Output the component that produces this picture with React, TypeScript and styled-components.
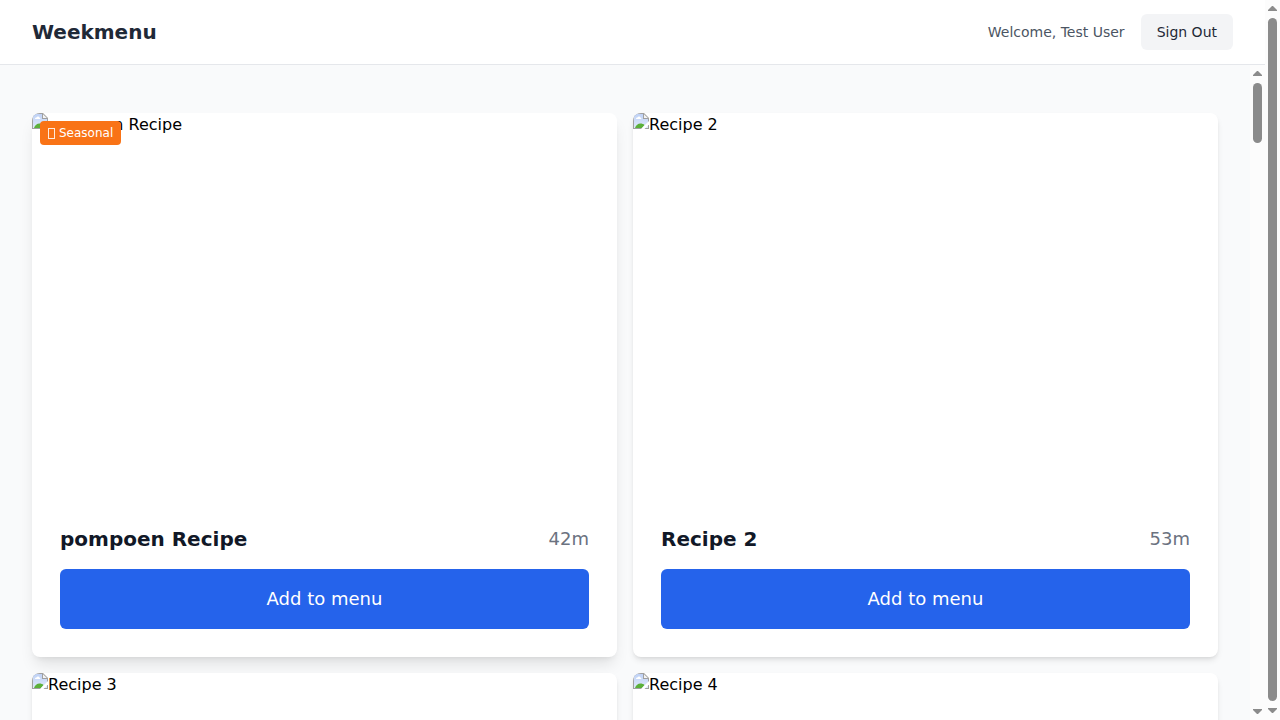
import React, { useCallback, useEffect, useRef, useState } from "react";
import styled, { createGlobalStyle } from "styled-components";

const GlobalStyle = createGlobalStyle`
  *, *::before, *::after { box-sizing: border-box; }
  body {
    margin: 0;
    color: #000;
    background: #f9fafb;
    font-family: "DejaVu Sans", sans-serif;
    font-size: 16px;
    line-height: 24px;
  }
  button { font-family: inherit; border: 0; cursor: pointer; }
  h1, h2 { margin: 0; }
`;

const Viewport = styled.div`
  display: flex;
  align-items: flex-start;
  height: 100vh;
  overflow: hidden;
`;

const Page = styled.div`
  flex: 1;
  min-width: 0;
`;

const Header = styled.header`
  display: flex;
  align-items: center;
  justify-content: space-between;
  padding: 14px 32px;
  background: #fff;
  border-bottom: 1px solid #e5e7eb;
`;

const Brand = styled.h1`
  font-size: 20px;
  line-height: 28px;
  font-weight: 700;
  color: #1f2937;
`;

const Account = styled.div`
  display: flex;
  align-items: center;
  gap: 16px;
  font-size: 14px;
  line-height: 20px;
`;

const Welcome = styled.span`
  color: #4b5563;
`;

const SignOutButton = styled.button`
  padding: 8px 16px;
  border-radius: 6px;
  background: #f3f4f6;
  color: #1f2937;
  font-size: 14px;
  line-height: 20px;
`;

const Content = styled.div`
  display: flex;
  height: calc(100vh - 64px);
`;

const Scroller = styled.main`
  flex: 1;
  min-width: 0;
  overflow-y: auto;
  scrollbar-width: none;
  padding: 48px 32px;
`;

const Bar = styled.div`
  display: flex;
  flex-direction: column;
  flex: none;
  align-self: stretch;
  gap: 7px;
  width: 15px;
  padding: 6px 3px 7px;
  background: #fcfcfc;
`;

const Arrow = styled.svg`
  flex: none;
  display: block;
  fill: #8b8b8b;
`;

const Track = styled.div`
  flex: 1;
  min-height: 0;
`;

const Thumb = styled.div`
  border-radius: 5px;
  background: #8b8b8b;
`;

const Grid = styled.div`
  display: grid;
  grid-template-columns: repeat(2, minmax(0, 1fr));
  gap: 16px;
`;

const Card = styled.article<{ $raised: boolean }>`
  position: relative;
  overflow: hidden;
  border-radius: 8px;
  background: #fff;
  box-shadow: ${(p) =>
    p.$raised
      ? "0 10px 15px -3px rgba(0,0,0,0.1), 0 4px 6px -4px rgba(0,0,0,0.1)"
      : "0 4px 6px -1px rgba(0,0,0,0.1), 0 2px 4px -2px rgba(0,0,0,0.1)"};
`;

const Photo = styled.div`
  display: flex;
  align-items: flex-start;
  height: 384px;
`;

const Badge = styled.span`
  position: absolute;
  top: 8px;
  left: 8px;
  display: flex;
  align-items: center;
  gap: 4px;
  padding: 4px 8px;
  border-radius: 4px;
  background: #f97316;
  color: #fff;
  font-size: 12px;
  line-height: 16px;
`;

const BadgeMark = styled.i`
  width: 7px;
  height: 11px;
  border: 1px solid rgba(255, 255, 255, 0.85);
`;

const CardBody = styled.div`
  display: flex;
  flex-direction: column;
  gap: 16px;
  padding: 28px;
`;

const TitleRow = styled.div`
  display: flex;
  align-items: center;
  justify-content: space-between;
`;

const Title = styled.h2`
  font-size: 20px;
  line-height: 28px;
  font-weight: 700;
  color: #111827;
`;

const Duration = styled.span`
  font-size: 18px;
  line-height: 28px;
  color: #6b7280;
`;

const AddButton = styled.button`
  padding: 16px 24px;
  border-radius: 6px;
  background: #2563eb;
  color: #fff;
  font-size: 18px;
  line-height: 28px;
`;

function MissingPhotoIcon() {
  return (
    <svg width="16" height="16" viewBox="0 0 16 16" aria-hidden="true">
      <defs>
        <linearGradient id="sky" x1="0" y1="0" x2="0" y2="1">
          <stop offset="0" stopColor="#bfd2f6" />
          <stop offset="1" stopColor="#dfe8fb" />
        </linearGradient>
      </defs>
      <path d="M0 0H11L16 5V16H0Z" fill="#a0a0a0" />
      <path d="M1 1H10V6H15V15H1Z" fill="url(#sky)" />
      <path d="M3 6C3 4.500 4 4.500 4.500 4.500C5 3 7 3 7.300 4.500C8.500 4.500 8.500 6 8 6Z" fill="#fff" />
      <path d="M2 15C3 12 5 10.500 7.500 10.500C9 10.500 10.500 11 11.500 12L9 15Z" fill="#5bb03a" />
      <path d="M11 1.200V5H14.800Z" fill="#f4f4f4" />
      <path d="M16 8L8 16H11.500L16 11.500Z" fill="#fff" />
    </svg>
  );
}

interface ScrollBarProps {
  size: number;
  position: number;
}

/* size: visible share of the content; position: share scrolled past */
function ScrollBar({ size, position }: ScrollBarProps) {
  return (
    <Bar aria-hidden="true">
      <Arrow width="9" height="5" viewBox="0 0 9 5">
        <path d="M4 0H5L9 4V5H0V4Z" />
      </Arrow>
      <Track>
        <Thumb
          style={{ height: `${size * 100}%`, position: "relative", top: `${position * 100}%` }}
        />
      </Track>
      <Arrow width="9" height="5" viewBox="0 0 9 5">
        <path d="M0 0H9V1L5 5H4L0 1Z" />
      </Arrow>
    </Bar>
  );
}

interface Recipe {
  name: string;
  minutes: number;
  seasonal: boolean;
}

const minutes = [42, 53, 35, 28, 47, 31, 55, 40, 25, 38, 50, 33];

const recipes: Recipe[] = Array.from({ length: 24 }, (_, i) => ({
  name: i === 0 ? "pompoen Recipe" : `Recipe ${i + 1}`,
  minutes: minutes[i % minutes.length],
  seasonal: i === 0,
}));

function RecipeCard({ recipe }: { recipe: Recipe }) {
  return (
    <Card $raised={recipe.seasonal}>
      <Photo>
        <MissingPhotoIcon />
        <span>{recipe.name}</span>
      </Photo>
      {recipe.seasonal && (
        <Badge>
          <BadgeMark aria-hidden="true" />
          Seasonal
        </Badge>
      )}
      <CardBody>
        <TitleRow>
          <Title>{recipe.name}</Title>
          <Duration>{recipe.minutes}m</Duration>
        </TitleRow>
        <AddButton type="button">Add to menu</AddButton>
      </CardBody>
    </Card>
  );
}

export default function App() {
  const scroller = useRef<HTMLElement>(null);
  const [scroll, setScroll] = useState<ScrollBarProps>({ size: 1, position: 0 });

  const measure = useCallback(() => {
    const el = scroller.current;
    if (!el) return;
    setScroll({
      size: el.clientHeight / el.scrollHeight,
      position: el.scrollTop / el.scrollHeight,
    });
  }, []);

  useEffect(() => {
    measure();
    window.addEventListener("resize", measure);
    return () => window.removeEventListener("resize", measure);
  }, [measure]);

  return (
    <>
      <GlobalStyle />
      <Viewport>
        <Page>
          <Header>
            <Brand>Weekmenu</Brand>
            <Account>
              <Welcome>Welcome, Test User</Welcome>
              <SignOutButton type="button">Sign Out</SignOutButton>
            </Account>
          </Header>
          <Content>
            <Scroller ref={scroller} onScroll={measure}>
              <Grid>
                {recipes.map((recipe) => (
                  <RecipeCard key={recipe.name} recipe={recipe} />
                ))}
              </Grid>
            </Scroller>
            <ScrollBar size={scroll.size} position={scroll.position} />
          </Content>
        </Page>
        <ScrollBar size={1} position={0} />
      </Viewport>
    </>
  );
}
